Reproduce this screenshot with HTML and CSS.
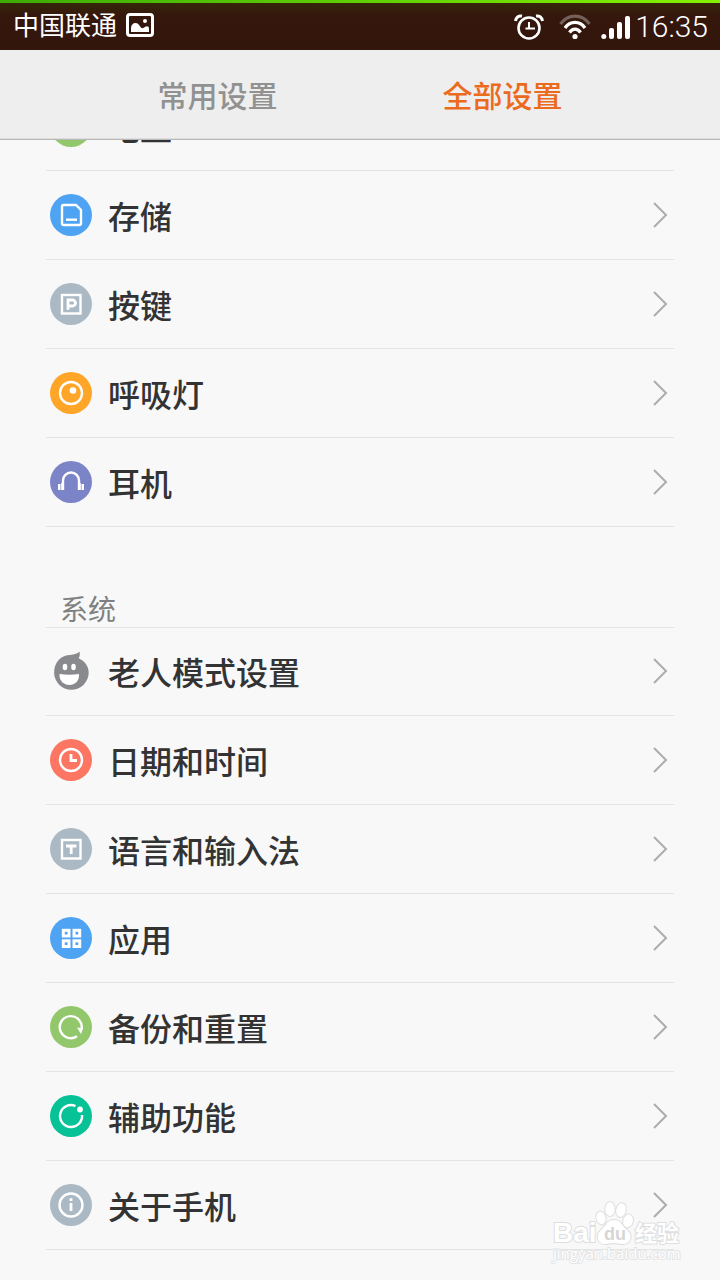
FILE: index.html
```html
<!DOCTYPE html>
<html lang="zh-CN">
<head>
    <meta charset="UTF-8">
    <meta name="viewport" content="width=device-width, initial-scale=1.0">
    <title>全部设置</title>
    <link rel="stylesheet" href="styles.css">
</head>
<body>

<div class="status-bar">
    <span class="carrier">中国联通</span>
    <svg class="picture-icon" width="28" height="24" viewBox="0 0 28 24">
        <rect x="1.5" y="1.5" width="25" height="21" rx="2.5" fill="none" stroke="#fff" stroke-width="3"/>
        <circle cx="19" cy="8" r="2" fill="#fff"/>
        <path d="M5 19v-4c0-3 2-5 4.500-5s3.500 2 5 4c1.500 2 3 1 4.500 0 2-1.500 4-.5 4 1.500V19z" fill="#fff"/>
    </svg>
    <div class="status-right">
        <svg width="30" height="26" viewBox="0 0 30 26" fill="none" stroke="#fff" stroke-width="2.600">
            <circle cx="15" cy="14" r="10.500"/>
            <path d="M15 8v6.500h6M11.500 14.500H15" stroke-width="2"/>
            <path d="M1.500 7C2 3.500 4.500 1.500 8 2M28.500 7C28 3.500 25.500 1.500 22 2" stroke-width="3"/>
        </svg>
        <svg class="wifi-icon" width="32" height="26" viewBox="0 0 32 26" fill="none" stroke="#fff" stroke-width="3.200">
            <path d="M1.500 10C9-.5 23-.5 30.500 10" stroke="#73605a"/>
            <path d="M6 14C11 6.500 21 6.500 26 14"/>
            <path d="M10.500 18.500c3-4.500 8-4.500 11 0"/>
            <circle cx="16" cy="22.500" r="2.600" fill="#fff" stroke="none"/>
        </svg>
        <svg class="signal-icon" width="30" height="26" viewBox="0 0 30 26" fill="#fff">
            <circle cx="2.800" cy="22.500" r="2.500"/>
            <rect x="8" y="14" width="5" height="11" rx="2"/>
            <rect x="16" y="8" width="5" height="17" rx="2"/>
            <rect x="24" y="2" width="5" height="23" rx="2"/>
        </svg>
        <span class="time">16:35</span>
    </div>
</div>

<nav class="tabs">
    <button class="tab" type="button">常用设置</button>
    <button class="tab active" type="button">全部设置</button>
</nav>

<main class="settings">
    <ul class="list device">
        <li><a class="row" href="#">
            <svg class="icon" viewBox="0 0 42 42"><circle cx="21" cy="21" r="21" fill="#92c76b"/></svg>
            <span class="label">电量</span>
            <svg class="arrow" viewBox="0 0 16 26"><path d="M2 1l12 12L2 25"/></svg>
        </a></li>
        <li><a class="row" href="#">
            <svg class="icon" viewBox="0 0 42 42">
                <circle cx="21" cy="21" r="21" fill="#4fa3f3"/>
                <path d="M13.500 11H26l5 5v13.500a1.500 1.500 0 0 1-1.500 1.500h-16a1.500 1.500 0 0 1-1.500-1.500v-17a1.500 1.500 0 0 1 1.500-1.500z"/>
                <path d="M16 25.700h11"/>
            </svg>
            <span class="label">存储</span>
            <svg class="arrow" viewBox="0 0 16 26"><path d="M2 1l12 12L2 25"/></svg>
        </a></li>
        <li><a class="row" href="#">
            <svg class="icon" viewBox="0 0 42 42">
                <circle cx="21" cy="21" r="21" fill="#abb9c4"/>
                <rect x="12" y="12" width="18.500" height="18.500"/>
                <path d="M18 26.800V17h4.500a3 3 0 0 1 0 6H18" stroke-width="2.800"/>
            </svg>
            <span class="label">按键</span>
            <svg class="arrow" viewBox="0 0 16 26"><path d="M2 1l12 12L2 25"/></svg>
        </a></li>
        <li><a class="row" href="#">
            <svg class="icon" viewBox="0 0 42 42">
                <circle cx="21" cy="21" r="21" fill="#ffa629"/>
                <circle cx="21" cy="21" r="11"/>
                <circle class="solid" cx="23" cy="18.500" r="3.300"/>
            </svg>
            <span class="label">呼吸灯</span>
            <svg class="arrow" viewBox="0 0 16 26"><path d="M2 1l12 12L2 25"/></svg>
        </a></li>
        <li><a class="row" href="#">
            <svg class="icon" viewBox="0 0 42 42">
                <circle cx="21" cy="21" r="21" fill="#7c84c8"/>
                <path d="M13 29V19.500a8 8 0 0 1 16 0V29"/>
                <path class="solid" d="M8 23h2.500v6H8zM11.200 22H14v7h-2.800zM28 22h2.800v7H28zM31.500 23H34v6h-2.500z"/>
            </svg>
            <span class="label">耳机</span>
            <svg class="arrow" viewBox="0 0 16 26"><path d="M2 1l12 12L2 25"/></svg>
        </a></li>
    </ul>

    <h2 class="section-title">系统</h2>

    <ul class="list system">
        <li><a class="row" href="#">
            <svg class="icon" viewBox="0 0 42 42">
                <path class="face" d="M16 5.500C21 4.500 26 5 29.500 1.500c.6 2.500.3 5-.8 6.800 6 2.700 10 8 10 14.200a17.300 17.200 0 1 1-34.600 0C4.100 14 9 7.500 16 5.500z"/>
                <ellipse class="solid" cx="15" cy="17" rx="2.300" ry="3.200"/>
                <ellipse class="solid" cx="23.500" cy="17" rx="2.300" ry="3.200"/>
                <path class="solid" d="M9.500 24c6.500 1 13 1 19.500 0 .5 7-4 11-9.500 11s-10.500-4-10-11z"/>
            </svg>
            <span class="label">老人模式设置</span>
            <svg class="arrow" viewBox="0 0 16 26"><path d="M2 1l12 12L2 25"/></svg>
        </a></li>
        <li><a class="row" href="#">
            <svg class="icon" viewBox="0 0 42 42">
                <circle cx="21" cy="21" r="21" fill="#fc7663"/>
                <circle cx="21" cy="21" r="11"/>
                <path d="M21 15v6.500h6" stroke-width="2.800"/>
            </svg>
            <span class="label">日期和时间</span>
            <svg class="arrow" viewBox="0 0 16 26"><path d="M2 1l12 12L2 25"/></svg>
        </a></li>
        <li><a class="row" href="#">
            <svg class="icon" viewBox="0 0 42 42">
                <circle cx="21" cy="21" r="21" fill="#abb9c4"/>
                <rect x="12" y="12" width="18.500" height="18.500"/>
                <path d="M16 18h10.500M21.200 18v8" stroke-width="2.800"/>
            </svg>
            <span class="label">语言和输入法</span>
            <svg class="arrow" viewBox="0 0 16 26"><path d="M2 1l12 12L2 25"/></svg>
        </a></li>
        <li><a class="row" href="#">
            <svg class="icon" viewBox="0 0 42 42">
                <circle cx="21" cy="21" r="21" fill="#4fa3f3"/>
                <g stroke-width="3">
                    <rect x="13.300" y="13.300" width="5.700" height="5.700"/>
                    <rect x="24" y="13.300" width="5.700" height="5.700"/>
                    <rect x="13.300" y="23.800" width="5.700" height="5.700"/>
                    <rect x="24" y="23.800" width="5.700" height="5.700"/>
                </g>
            </svg>
            <span class="label">应用</span>
            <svg class="arrow" viewBox="0 0 16 26"><path d="M2 1l12 12L2 25"/></svg>
        </a></li>
        <li><a class="row" href="#">
            <svg class="icon" viewBox="0 0 42 42">
                <circle cx="21" cy="21" r="21" fill="#92c76b"/>
                <path d="M27 30.200A11 11 0 1 1 31.500 23.500"/>
                <path class="solid" d="M27 21.500l6 1-2 5.500z"/>
            </svg>
            <span class="label">备份和重置</span>
            <svg class="arrow" viewBox="0 0 16 26"><path d="M2 1l12 12L2 25"/></svg>
        </a></li>
        <li><a class="row" href="#">
            <svg class="icon" viewBox="0 0 42 42">
                <circle cx="21" cy="21" r="21" fill="#07c296"/>
                <path d="M25.500 11A11 11 0 1 0 32 20"/>
                <circle class="solid" cx="30" cy="14.500" r="2.900"/>
            </svg>
            <span class="label">辅助功能</span>
            <svg class="arrow" viewBox="0 0 16 26"><path d="M2 1l12 12L2 25"/></svg>
        </a></li>
        <li><a class="row" href="#">
            <svg class="icon" viewBox="0 0 42 42">
                <circle cx="21" cy="21" r="21" fill="#abb9c4"/>
                <circle cx="21" cy="21" r="11.500"/>
                <path d="M21 19v8M21 14.300v2.700" stroke-width="2.800"/>
            </svg>
            <span class="label">关于手机</span>
            <svg class="arrow" viewBox="0 0 16 26"><path d="M2 1l12 12L2 25"/></svg>
        </a></li>
    </ul>
</main>

<div class="watermark">
    <svg width="132" height="66" viewBox="0 0 132 66">
        <g class="mark">
            <text x="3" y="41" font-size="28">Bai</text>
            <ellipse cx="51" cy="17" rx="4.500" ry="6.500" transform="rotate(-15 51 17)"/>
            <ellipse cx="60" cy="8" rx="4.700" ry="7"/>
            <ellipse cx="71" cy="9" rx="4.700" ry="7" transform="rotate(12 71 9)"/>
            <ellipse cx="78" cy="20" rx="4.800" ry="6.500" transform="rotate(15 78 20)"/>
            <path d="M64 19c7 0 8 6 13 10 7 6 3 14-4 14-4 0-6-1-9-1s-5 1-9 1c-7 0-10-8-4-14 5-4 6-10 13-10z"/>
            <text class="du" x="54" y="39" font-size="18">du</text>
            <text x="85" y="40" font-size="22">经验</text>
            <text class="url" x="3" y="58" font-size="15">jingyan.baidu.com</text>
        </g>
    </svg>
</div>

</body>
</html>
```
FILE: styles.css
```css
* {
    box-sizing: border-box;
}
body {
    display: flex;
    flex-direction: column;
    height: 100vh;
    margin: 0;
    overflow: hidden;
    background-color: #f8f8f8;
    font-family: "Noto Sans CJK SC", sans-serif;
    color: #333;
}
ul {
    list-style: none;
    margin: 0;
    padding: 0;
}

/* status bar */
.status-bar {
    position: relative;
    display: flex;
    align-items: center;
    height: 50px;
    flex: none;
    padding: 0 12px 0 13px;
    background: linear-gradient(#36260a 3px, #35170c 16px, #32150c);
    color: #fff;
}
.status-bar::before {
    content: "";
    position: absolute;
    top: 0;
    left: 0;
    right: 0;
    height: 3px;
    background: linear-gradient(to right, #3cab05, #84f203);
}
.carrier {
    padding-bottom: 2px;
    font-size: 26px;
    line-height: 48px;
}
.picture-icon {
    margin-left: 9px;
}
.status-right {
    display: flex;
    align-items: center;
    margin-left: auto;
    padding-top: 3px;
}
.wifi-icon {
    margin-left: 15px;
}
.signal-icon {
    margin: 0 4px 0 10px;
}
.time {
    font-family: Roboto, sans-serif;
    font-size: 30px;
    font-weight: 300;
    line-height: 50px;
}

/* tabs */
.tabs {
    display: flex;
    flex: none;
    height: 90px;
    padding: 0 75px 2px;
    background-color: #eee;
    border-bottom: 1px solid #b8b8b8;
    box-shadow: inset 0 -1px #ddd;
}
.tab {
    flex: 1;
    padding: 0;
    border: none;
    background: none;
    font-family: inherit;
    font-size: 30px;
    font-weight: 500;
    color: #919191;
}
.tab.active {
    color: #ec6a1d;
}

/* settings list */
.settings {
    flex: 1;
    min-height: 0;
    padding: 0 46px;
    overflow: hidden;
}
.device {
    margin-top: -58px;
}
.row {
    display: flex;
    align-items: center;
    height: 89px;
    padding: 0 6px 0 4px;
    border-bottom: 1px solid #e4e4e4;
    color: inherit;
    text-decoration: none;
}
.icon {
    width: 42px;
    height: 42px;
    fill: none;
    stroke: #fff;
    stroke-width: 2.4;
}
.icon > circle:first-child,
.icon .face,
.icon .solid {
    stroke: none;
}
.icon .solid {
    fill: #fff;
}
.icon .face {
    fill: #888a8e;
}
.label {
    flex: 1;
    margin-left: 16px;
    font-size: 32px;
    font-weight: 500;
    line-height: 48px;
}
.arrow {
    width: 16px;
    height: 26px;
    fill: none;
    stroke: #adadad;
    stroke-width: 2;
}
.section-title {
    margin: 0;
    padding: 62px 14px 0;
    border-bottom: 1px solid #e4e4e4;
    font-size: 28px;
    font-weight: 400;
    line-height: 38px;
    color: #808080;
}
.system {
    margin-top: -1px;
}

/* watermark over the last row */
.watermark {
    position: absolute;
    right: 38px;
    bottom: 13px;
    pointer-events: none;
}
.watermark svg {
    display: block;
    overflow: visible;
}
.mark {
    fill: #fff;
    stroke: #dedede;
    stroke-width: 2;
    paint-order: stroke;
    font-family: "Liberation Sans", "Noto Sans CJK SC", sans-serif;
    font-weight: 700;
}
.mark .du {
    fill: #d6d6d6;
    stroke: none;
}
.mark .url {
    font-family: "Open Sans", sans-serif;
    font-weight: 400;
    stroke: #e4e4e4;
}
```
